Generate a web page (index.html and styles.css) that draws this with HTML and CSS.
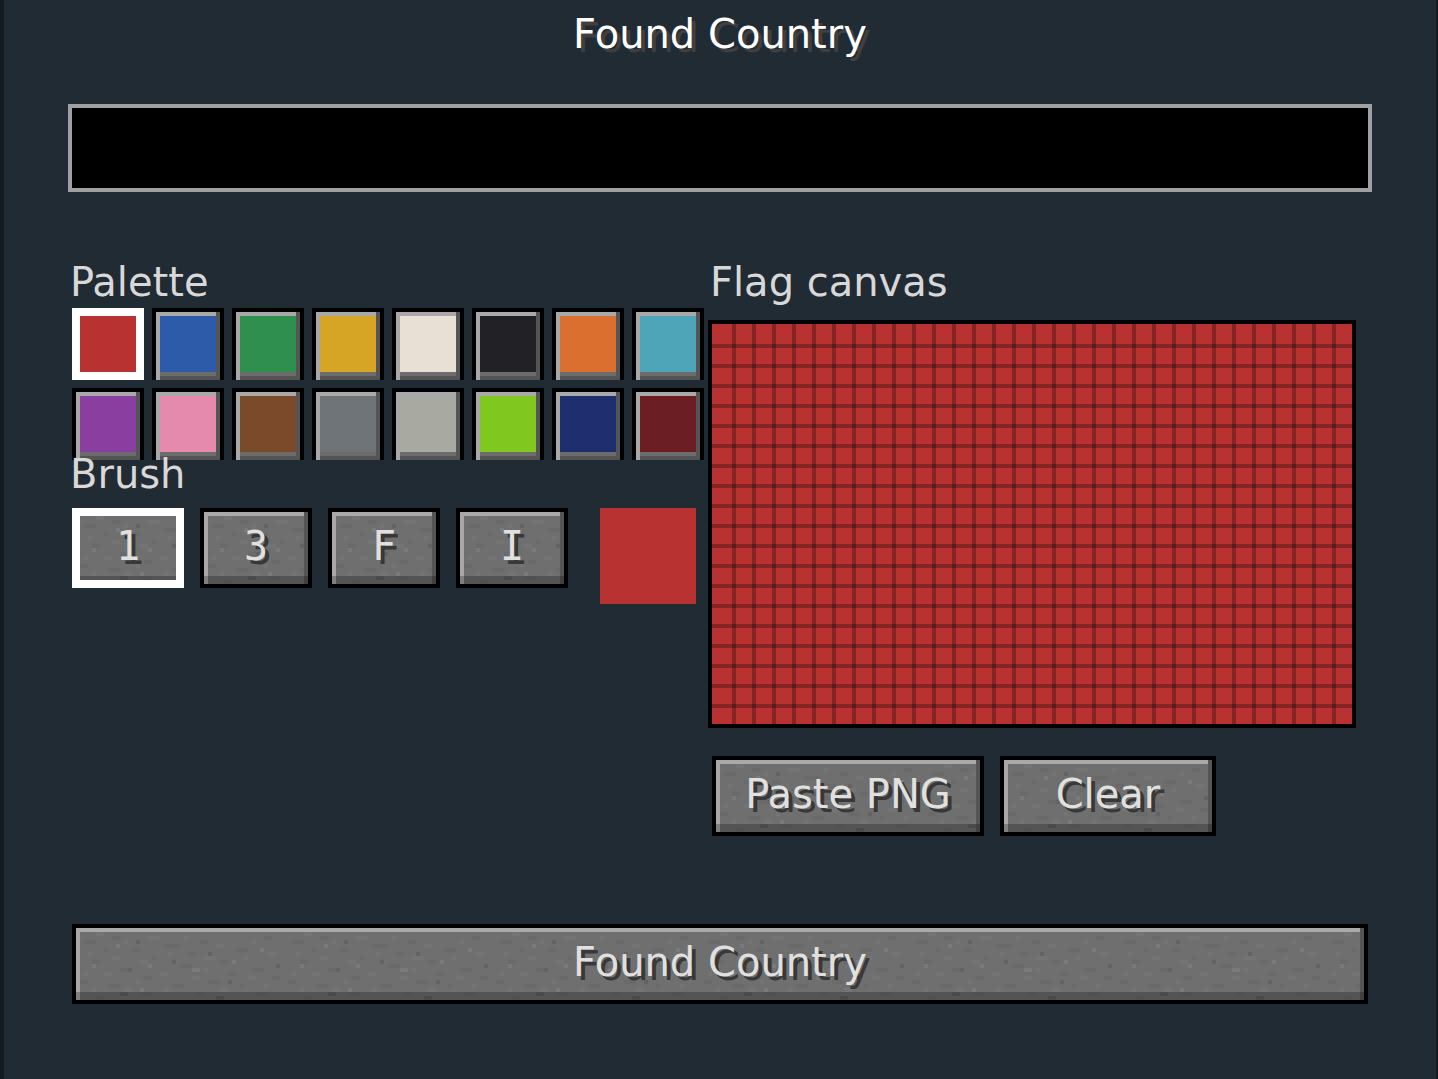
FILE: index.html
```
<!DOCTYPE html>
<html lang="en">
<head>
    <meta charset="UTF-8">
    <meta name="viewport" content="width=device-width, initial-scale=1.0">
    <title>Found Country</title>
    <link rel="stylesheet" href="styles.css">
</head>
<body>
    <form class="screen">
        <h1 class="title">Found Country</h1>
        <input class="name-input" type="text" aria-label="Country name">

        <div class="editor">
            <div class="tools">
                <h2 class="label">Palette</h2>
                <div class="palette">
                    <button type="button" class="swatch red selected" aria-label="Red"></button>
                    <button type="button" class="swatch blue" aria-label="Blue"></button>
                    <button type="button" class="swatch green" aria-label="Green"></button>
                    <button type="button" class="swatch yellow" aria-label="Yellow"></button>
                    <button type="button" class="swatch white" aria-label="White"></button>
                    <button type="button" class="swatch black" aria-label="Black"></button>
                    <button type="button" class="swatch orange" aria-label="Orange"></button>
                    <button type="button" class="swatch cyan" aria-label="Cyan"></button>
                    <button type="button" class="swatch purple" aria-label="Purple"></button>
                    <button type="button" class="swatch pink" aria-label="Pink"></button>
                    <button type="button" class="swatch brown" aria-label="Brown"></button>
                    <button type="button" class="swatch gray" aria-label="Gray"></button>
                    <button type="button" class="swatch silver" aria-label="Light gray"></button>
                    <button type="button" class="swatch lime" aria-label="Lime"></button>
                    <button type="button" class="swatch navy" aria-label="Navy"></button>
                    <button type="button" class="swatch maroon" aria-label="Maroon"></button>
                </div>
                <h2 class="label">Brush</h2>
                <div class="brushes">
                    <button type="button" class="btn brush selected">1</button>
                    <button type="button" class="btn brush">3</button>
                    <button type="button" class="btn brush">F</button>
                    <button type="button" class="btn brush">I</button>
                    <div class="preview" id="preview"></div>
                </div>
            </div>

            <div class="flag">
                <h2 class="label">Flag canvas</h2>
                <canvas class="flag-canvas" id="flag" width="640" height="400"></canvas>
                <div class="actions">
                    <button type="button" class="btn paste">Paste PNG</button>
                    <button type="button" class="btn clear" id="clear">Clear</button>
                </div>
            </div>
        </div>

        <button type="button" class="btn submit">Found Country</button>
    </form>
    <script src="script.js"></script>
</body>
</html>
```

FILE: styles.css
```
* {
    box-sizing: border-box;
}
body {
    margin: 0;
    min-height: 100vh;
    background: #212b33;
    border-left: 4px solid #151c21;
    border-right: 2px solid #151c21;
    font-family: 'DejaVu Sans', sans-serif;
    font-size: 40px;
    line-height: 40px;
    color: #d8d8d8;
}
.screen {
    display: flex;
    flex-direction: column;
    padding: 14px 64px;
}
.title {
    margin: 0 0 50px;
    font-size: 40px;
    font-weight: 400;
    text-align: center;
    color: #ffffff;
    text-shadow: 4px 4px 0 #3f3f3f;
}
.name-input {
    width: 100%;
    height: 88px;
    padding: 0 16px;
    border: 4px solid #a0a0a0;
    border-radius: 0;
    outline: none;
    background: #000000;
    color: #e0e0e0;
    font: inherit;
}
.editor {
    display: flex;
    flex-wrap: wrap;
    margin-top: 70px;
}
.label {
    margin: 0;
    padding-left: 2px;
    font-size: 40px;
    font-weight: 400;
}
.palette {
    display: grid;
    grid-template-columns: repeat(8, 72px);
    gap: 8px;
    margin: 6px 4px -6px;
}
.swatch {
    height: 72px;
    padding: 0;
    border: 4px solid #000000;
    border-bottom: 0;
    border-radius: 0;
    box-shadow: inset 4px 0 0 #a9a9a9, inset 0 -4px 0 #545454, inset -4px 0 0 #555555, inset 0 4px 0 #a9a9a9, inset 0 -8px 0 #6c6c6c;
    cursor: pointer;
}
.swatch.selected {
    border: 4px solid #ffffff;
    box-shadow: inset 0 0 0 4px #ffffff;
}
.red { background-color: #b83232; }
.blue { background-color: #2d5baa; }
.green { background-color: #2f8f4e; }
.yellow { background-color: #d6a526; }
.white { background-color: #e8e0d4; }
.black { background-color: #222226; }
.orange { background-color: #da6f30; }
.cyan { background-color: #4fa5b8; }
.purple { background-color: #8a3fa0; }
.pink { background-color: #e58aad; }
.brown { background-color: #7a4a2a; }
.gray { background-color: #6f7478; }
.silver { background-color: #a8a9a0; }
.lime { background-color: #80c820; }
.navy { background-color: #1f2e6e; }
.maroon { background-color: #6b1e23; }
.brushes {
    display: flex;
    gap: 16px;
    margin: 14px 4px 0;
}
/* stone texture, one unit of the drawing is a 4px block */
.btn {
    height: 80px;
    padding: 0 0 4px;
    border: 4px solid #000000;
    border-radius: 0;
    background: #6f6f6f url("data:image/svg+xml,%3Csvg xmlns='http://www.w3.org/2000/svg' width='208' height='72' viewBox='0 0 52 18' shape-rendering='crispEdges' fill='none'%3E%3Cpath stroke='%236a6a6a' d='M2 3.5h3M9 2.5h2M14 5.5h2M22 4.5h4M31 3.5h2M40 5.5h3M47 2.5h2M4 8.5h2M11 10.5h3M19 7.5h1M26 9.5h3M36 8.5h2M44 10.5h3M1 13.5h2M8 14.5h3M17 12.5h2M24 14.5h3M33 13.5h3M41 14.5h1M49 12.5h2M7 5.5h1M28 6.5h2M38 11.5h2M16 16.5h3M30 16.5h2M45 16.5h3M5 17.5h2'/%3E%3Cpath stroke='%23747474' d='M5 1.5h2M12 3.5h1M18 2.5h3M27 2.5h1M35 4.5h2M44 3.5h1M3 6.5h1M9 7.5h2M16 8.5h2M23 6.5h1M32 7.5h3M42 7.5h1M48 6.5h2M2 11.5h1M7 11.5h2M15 13.5h1M21 11.5h2M29 12.5h2M36 15.5h2M43 12.5h2M4 15.5h1M12 15.5h2M22 15.5h1M32 10.5h1M47 14.5h1'/%3E%3Cpath stroke='%237a7a7a' d='M4 9.5h1M18 9.5h1M29 10.5h2M39 8.5h1M16 15.5h1M46 5.5h1M10 4.5h1'/%3E%3Cpath stroke='%23636363' d='M13 10.5h1M15 3.5h1M33 6.5h1M38 13.5h1M24 8.5h1M50 9.5h1M11 16.5h2M35 17.5h2'/%3E%3C/svg%3E");
    box-shadow: inset 0 -8px 0 rgba(0, 0, 0, 0.24), inset 4px 0 0 #a9a9a9, inset -4px 0 0 #555555, inset 0 4px 0 #a9a9a9;
    color: #e0e0e0;
    font: inherit;
    text-align: center;
    text-shadow: 4px 4px 0 #383838;
    cursor: pointer;
}
.btn.selected {
    border-color: #ffffff;
    box-shadow: inset 0 0 0 4px #ffffff, inset 0 -8px 0 rgba(0, 0, 0, 0.24);
}
.brush {
    width: 112px;
    font-family: 'DejaVu Sans Mono', monospace;
}
.preview {
    width: 96px;
    height: 96px;
    margin-left: 16px;
    background: #b83232;
}
.flag-canvas {
    display: block;
    box-sizing: content-box;
    margin-top: 18px;
    border: 4px solid #000000;
}
.actions {
    display: flex;
    gap: 16px;
    margin: 28px 4px 0;
}
.paste {
    width: 272px;
}
.clear {
    width: 216px;
}
.submit {
    margin: 88px 4px 0;
}
```

FILE: script.js
```
const COLS = 32;
const ROWS = 20;
const CELL = 20;

const canvas = document.getElementById('flag');
const ctx = canvas.getContext('2d');
const preview = document.getElementById('preview');
let color = '#b83232';
let cells = new Array(COLS * ROWS).fill(color);

function draw() {
    cells.forEach((c, i) => {
        ctx.fillStyle = c;
        ctx.fillRect((i % COLS) * CELL, Math.floor(i / COLS) * CELL, CELL, CELL);
    });
    // grid lines between the cells
    ctx.fillStyle = 'rgba(0, 0, 0, 0.27)';
    for (let x = 1; x < COLS; x++) ctx.fillRect(x * CELL, 0, 4, ROWS * CELL);
    for (let y = 1; y < ROWS; y++) ctx.fillRect(0, y * CELL, COLS * CELL, 4);
}

function select(group, btn) {
    document.querySelectorAll(group).forEach(b => b.classList.remove('selected'));
    btn.classList.add('selected');
}

document.querySelectorAll('.swatch').forEach(btn => {
    btn.addEventListener('click', () => {
        select('.swatch', btn);
        color = getComputedStyle(btn).backgroundColor;
        preview.style.background = color;
    });
});

document.querySelectorAll('.brush').forEach(btn => {
    btn.addEventListener('click', () => select('.brush', btn));
});

canvas.addEventListener('click', e => {
    const x = Math.floor(e.offsetX / CELL);
    const y = Math.floor(e.offsetY / CELL);
    cells[y * COLS + x] = color;
    draw();
});

document.getElementById('clear').addEventListener('click', () => {
    cells.fill(color);
    draw();
});

draw();
```
